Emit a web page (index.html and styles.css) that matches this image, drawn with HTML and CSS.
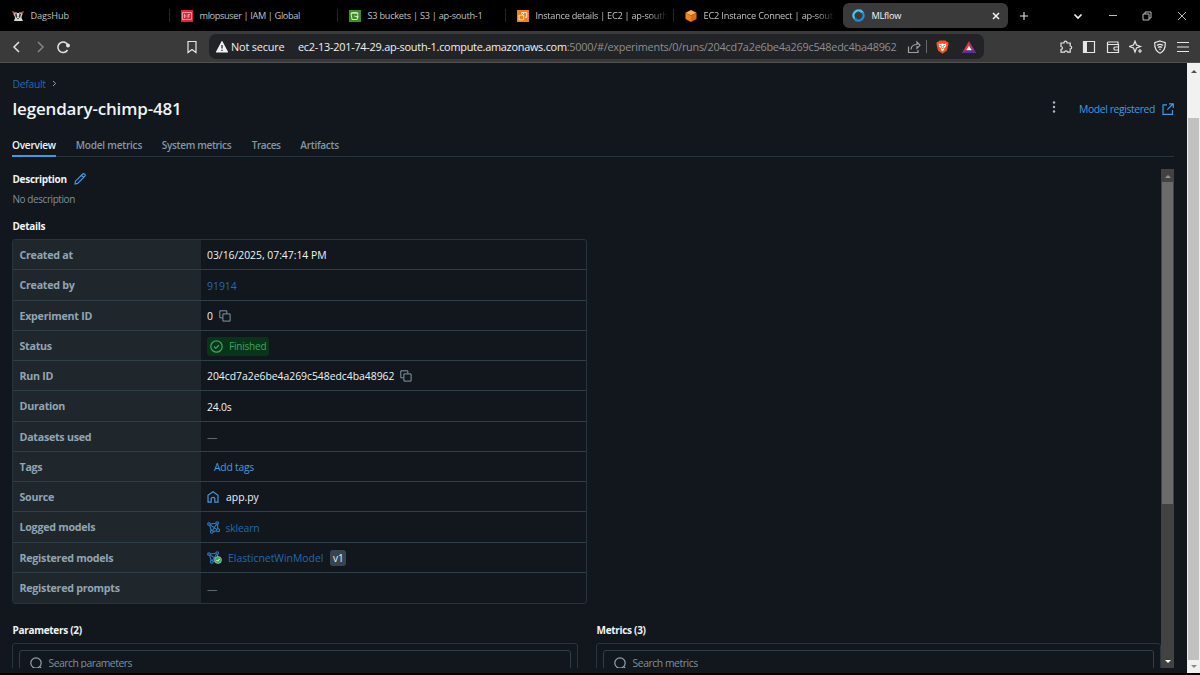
FILE: index.html
```html
<!DOCTYPE html>
<html lang="en">
<head>
<meta charset="utf-8">
<title>MLflow</title>
<link rel="stylesheet" href="styles.css">
</head>
<body>
<svg class="defs" width="0" height="0">
  <symbol id="copy" viewBox="0 0 12 12"><path d="M3.5 7.8H.8V.8h7v2.7M3.9 3.9h7.2v7.2H3.9z"/></symbol>
  <symbol id="model" viewBox="0 0 13 13"><path d="M3.300 3l5.500-.7M2.600 4.300l1.700 5.200M3.200 3.900l6.500 4.500M9.500 3.300L5.500 9.500M10.400 3.400l.4 4.400M6.200 10.600l3.500-.8"/><circle cx="2" cy="3" r="1.300"/><circle cx="10.200" cy="2.100" r="1.300"/><circle cx="11" cy="9.300" r="1.500"/><circle cx="4.800" cy="10.800" r="1.400"/></symbol>
  <symbol id="search" viewBox="0 0 13 13"><circle cx="6" cy="6" r="5.200"/><path d="M9.700 9.700l2.700 2.800"/></symbol>
</svg>
<div class="window">
  <header class="tabbar">
    <div class="tab first">
      <svg class="fav" viewBox="0 0 12 12"><path d="M0 1l3 1 1 3-2 1zM12 1L9 2 8 5l2 1z" fill="#b4575c"/><path d="M2 4l2-2 1 1h2l1-1 2 2-.5 4L11 11H2l1-3z" fill="#d8d8d8"/><path d="M3 4l1.500-1 .8 4L4 8zM9 4L7.500 3l-.8 4L8 8z" fill="#333"/><path d="M5 8h2l-1 1.500z" fill="#222"/></svg>
      <span class="t1">DagsHub</span>
    </div>
    <div class="tab">
      <svg class="fav" viewBox="0 0 12 12"><path d="M0 0h12v12H0z" fill="#e0243a"/><path d="M1.500 2.500h9v7h-9zM3.500 4v4M3.500 6h2M7 8V4.500h2M7 6h1.500" stroke="#ffb3b8" stroke-width=".8"/></svg>
      <span class="t2">mlopsuser | IAM | Global</span>
    </div>
    <div class="tab">
      <svg class="fav" viewBox="0 0 12 12"><path d="M0 0h12v12H0z" fill="#3f8e25"/><path d="M2 3.200h7l-.8 6.300H3zM2 3.200c1-1 6-1 7 0M5.300 6l4.500 1.200" stroke="#e5f4df" stroke-width=".9"/></svg>
      <span class="t3">S3 buckets | S3 | ap-south-1</span>
    </div>
    <div class="tab">
      <svg class="fav" viewBox="0 0 12 12"><path d="M0 0h12v12H0z" fill="#f08019"/><path d="M2 5.200h4.700v4.600H2zM4.700 3.800V2.500h5v4.800H8M5 5l2-2" stroke="#fff0dc" stroke-width=".9"/></svg>
      <span class="t4 fade">Instance details | EC2 | ap-south</span>
    </div>
    <div class="tab last">
      <svg class="fav" viewBox="0 0 12 12"><path d="M6 0l5.500 2.700L6 5.400.5 2.700z" fill="#ffad55"/><path d="M.5 2.700L6 5.400V12L.5 9z" fill="#f58220"/><path d="M11.500 2.700L6 5.400V12l5.500-3z" fill="#e26a10"/></svg>
      <span class="t5 fade">EC2 Instance Connect | ap-sout</span>
    </div>
    <div class="tab active">
      <svg class="fav" viewBox="0 0 12 12" stroke-width="2"><path d="M2.300 8.900A4.700 4.700 0 0 1 8.200 1.900" stroke="#43c9ed"/><path d="M9.700 3.100A4.700 4.700 0 0 1 3.800 10.100" stroke="#1593e0"/><path d="M8 0l3 3-3.300.8z" fill="#43c9ed"/><path d="M4 12L1 9l3.300-.8z" fill="#1593e0"/></svg>
      <span class="t6">MLflow</span>
      <svg class="close" viewBox="0 0 8 8"><path d="M1 1l6 6M7 1L1 7"/></svg>
    </div>
    <svg class="plus" viewBox="0 0 10 10"><path d="M5 1v8M1 5h8"/></svg>
    <div class="winctl">
      <svg viewBox="0 0 12 12"><path d="M2.500 4.500L6 8l3.500-3.500" stroke-width="1.700"/></svg>
      <svg viewBox="0 0 12 12" class="dim"><path d="M2 5.500h8"/></svg>
      <svg viewBox="0 0 12 12" class="dim"><path d="M2 4h6v6H2zM4 4V2h6v6H8"/></svg>
      <svg viewBox="0 0 12 12" class="dim"><path d="M2 2l8 8M10 2l-8 8"/></svg>
    </div>
  </header>
  <div class="toolbar">
    <div class="nav">
      <svg viewBox="0 0 14 14"><path d="M9 2L4 7l5 5"/></svg>
      <svg viewBox="0 0 14 14" class="off"><path d="M5 2l5 5-5 5"/></svg>
      <svg viewBox="0 0 14 14"><path d="M11.500 10A5.200 5.200 0 1 1 12 5.500"/><circle cx="12" cy="5.500" r="1.200" fill="#e6e6e6"/></svg>
    </div>
    <svg class="bookmark" viewBox="0 0 14 14"><path d="M3 1.500h8v11L7 9.500l-4 3z"/></svg>
    <div class="address">
      <svg class="warn" viewBox="0 0 12 12"><path d="M6 .8L11.500 11H.5z" fill="#f2f2f2" stroke="#f2f2f2"/><path d="M6 4v3.500M6 8.700v1.200" stroke="#25272b" stroke-width="1.300"/></svg>
      <span class="insecure">Not secure</span>
      <span class="url"><b>ec2-13-201-74-29.ap-south-1.compute.amazonaws.com</b><i>:5000/#/experiments/0/runs/204cd7a2e6be4a269c548edc4ba48962</i></span>
      <svg class="share" viewBox="0 0 14 14"><path d="M1.500 6.500v6h9.500V10M4 9.500c.3-3.500 2.500-5 6-5V2l3 3.300-3 3V6"/></svg>
      <span class="bar"></span>
      <svg class="brave" viewBox="0 0 13 14"><path d="M3.500.5h6l1.200 1.200 1.500.3.3 2.500-1.500 6L6.500 13.700 2 10.500.5 4.500.800 2l1.500-.3z" fill="#f6501e"/><path d="M2.600 3.500l2.500.4 1.400-.5 1.400.5 2.500-.4-.6 3-1.800 2.200.3 1-1.800 1.600L4.700 9.700l.3-1-1.800-2.200z" fill="#fff"/><path d="M4 5.200l2 .9-.7 1.400L6.500 9l1.200-1.500L7 6.100l2-.9" stroke="#f6501e" stroke-width=".8"/></svg>
      <svg class="bat" viewBox="0 0 14 12"><path d="M7 0L0 12h3.500L7 5.500z" fill="#e4363c"/><path d="M7 0l7 12h-3.500L7 5.500z" fill="#a33480"/><path d="M0 12l2.800-2.800h8.400L14 12z" fill="#59309a"/><path d="M7 4.700L4.300 9.300h5.400z" fill="#fff"/></svg>
    </div>
    <div class="ext">
      <svg viewBox="0 0 14 14"><path d="M2 3h3c-.3-2.500 3.300-2.500 3 0h3.200v3c2 .2 2 2.800 0 3v3.200H8.500c-.3-1.700-2.700-1.700-3 0H2V9.500c2-.3 2-2.700 0-3z"/></svg>
      <svg viewBox="0 0 14 14"><path d="M1.500 1.500h11v11h-11z"/><path d="M1.500 1.500H5v11H1.500z" fill="#e6e6e6"/></svg>
      <svg viewBox="0 0 14 14"><path d="M12 4.500V2H2.500C1 2 1 4.500 2.500 4.500H12.500v8h-11V3M12.500 7H9c-1.500 0-1.500 3 0 3h3.500"/></svg>
      <svg viewBox="0 0 14 14"><path d="M6 1.200L7.500 5l4 1.500-4 1.500L6 12 4.500 8l-4-1.500L4.500 5zM11 9v4M9 11h4"/></svg>
      <svg viewBox="0 0 14 14"><path d="M7 1l5.300 1.800C12.500 8 11 11.500 7 13.200 3 11.500 1.500 8 1.700 2.800z"/><path d="M4 5.500c2-1.500 4-1.500 6 0M5 7.500c1.300-1 2.700-1 4 0M6.300 9.300h1.400" stroke-width="1.300"/></svg>
      <svg viewBox="0 0 14 14"><path d="M1 2.500h12M1 7h12M1 11.500h12"/></svg>
    </div>
  </div>
  <div class="viewport">
    <main class="page">
      <div class="crumbs"><span>Default</span><svg viewBox="0 0 5 7"><path d="M1 1l2.700 2.500L1 6"/></svg></div>
      <div class="titlerow">
        <h1>legendary-chimp-481</h1>
        <svg class="kebab" viewBox="0 0 4 12"><circle cx="2" cy="1.600" r="1.250"/><circle cx="2" cy="6" r="1.250"/><circle cx="2" cy="10.400" r="1.250"/></svg>
        <span class="registered">Model registered</span>
        <svg class="external" viewBox="0 0 12 12"><path d="M5 1.800H1v9.500h9.500V7M7 .8h4.300V5M11 1L5.300 6.700"/></svg>
      </div>
      <nav class="tabs">
        <a class="on n1">Overview</a><a class="n2">Model metrics</a><a class="n3">System metrics</a><a class="n4">Traces</a><a class="n5">Artifacts</a>
      </nav>
      <div class="scroller">
        <div class="content">
          <h2 class="desc"><span>Description</span><svg viewBox="0 0 12 12"><path d="M1 11l.5-2.800L8.700 1c1.200-1 3.200.9 2.200 2.200L3.700 10.400zM7.500 2.300l2.200 2.200"/></svg></h2>
          <p class="nodesc"><span>No description</span></p>
          <h2 class="details"><span>Details</span></h2>
          <div class="table">
            <div class="row"><div class="label"><span>Created at</span></div><div class="value"><span class="date">03/16/2025, 07:47:14 PM</span></div></div>
            <div class="row"><div class="label"><span>Created by</span></div><div class="value"><span class="link">91914</span></div></div>
            <div class="row"><div class="label"><span>Experiment ID</span></div><div class="value"><span>0</span><svg class="copy"><use href="#copy"/></svg></div></div>
            <div class="row"><div class="label"><span>Status</span></div><div class="value"><div class="status"><svg viewBox="0 0 13 13"><circle cx="6.500" cy="6.500" r="5.700"/><path d="M4 6.500l1.800 1.800L9 5"/></svg><span>Finished</span></div></div></div>
            <div class="row"><div class="label"><span>Run ID</span></div><div class="value"><span class="runid">204cd7a2e6be4a269c548edc4ba48962</span><svg class="copy"><use href="#copy"/></svg></div></div>
            <div class="row"><div class="label"><span>Duration</span></div><div class="value"><span class="dur">24.0s</span></div></div>
            <div class="row"><div class="label"><span>Datasets used</span></div><div class="value"><span class="dash">—</span></div></div>
            <div class="row"><div class="label"><span>Tags</span></div><div class="value"><span class="add">Add tags</span></div></div>
            <div class="row"><div class="label"><span>Source</span></div><div class="value"><svg class="ico" viewBox="0 0 12 12"><path d="M1 11.200V4.200L6 .8l5 3.400v7H7.800V7.500c0-1.500-3.600-1.500-3.600 0v3.700z"/></svg><span class="src">app.py</span></div></div>
            <div class="row"><div class="label"><span>Logged models</span></div><div class="value"><svg class="ico model"><use href="#model"/></svg><span class="link sk">sklearn</span></div></div>
            <div class="row"><div class="label"><span>Registered models</span></div><div class="value"><span class="regicon"><svg class="ico model"><use href="#model"/></svg><svg class="ok" viewBox="0 0 8 8"><circle cx="4" cy="4" r="3.500"/><path d="M2.500 4l1.100 1.200L5.600 3"/></svg></span><span class="link ewm">ElasticnetWinModel</span><span class="ver">v1</span></div></div>
            <div class="row"><div class="label"><span>Registered prompts</span></div><div class="value"><span class="dash">—</span></div></div>
          </div>
          <div class="panels">
            <section class="params"><h2><span>Parameters (2)</span></h2><div class="panel"><div class="field"><svg><use href="#search"/></svg><span>Search parameters</span></div></div></section>
            <section class="metrics"><h2><span>Metrics (3)</span></h2><div class="panel"><div class="field"><svg><use href="#search"/></svg><span>Search metrics</span></div></div></section>
          </div>
        </div>
        <div class="innerbar"><svg viewBox="0 0 12 13"><path d="M3 9h6L6 6z" fill="#949494"/></svg><div class="thumb"></div><svg class="down" viewBox="0 0 12 13"><path d="M3 5h6L6 8z" fill="#fff"/></svg></div>
      </div>
    </main>
    <div class="outerbar"><svg viewBox="0 0 12 12"><path d="M3 8h6L6 5z" fill="#505050"/></svg><div class="thumb"></div><svg viewBox="0 0 12 12"><path d="M3 5h6L6 8z" fill="#8a8a8a"/></svg></div>
  </div>
</div>
</body>
</html>
```
FILE: styles.css
```css
* { box-sizing: border-box; }
body { margin: 0; background: #000; font-family: "Open Sans", "Noto Sans", sans-serif; font-size: 10.4px; color: #f0f3f6; }
h1, h2, p { margin: 0; }
svg { display: block; flex: none; fill: none; stroke: currentColor; }
svg path[fill]:not([stroke]) { stroke: none; }
.defs { position: absolute; }
span { white-space: nowrap; }
.window { width: 1200px; height: 675px; overflow: hidden; display: flex; flex-direction: column; }

.tabbar { height: 31px; flex: none; display: flex; align-items: center; background: #000; color: #c2c2c2; font-size: 9.2px; letter-spacing: -.26px; }
.tab { width: 168px; height: 25px; flex: none; display: flex; align-items: center; padding-left: 11px; gap: 6.500px; position: relative; }
.tab::after { content: ""; position: absolute; right: 0; top: 6px; width: 1px; height: 13px; background: #252525; }
.tab.first { width: 170px; padding-left: 12px; }
.tab.last { width: 169px; }
.tab.last::after, .tab.active::after { display: none; }
.t1 { letter-spacing: -.1px; }
.t2 { letter-spacing: -.36px; }
.t5 { letter-spacing: -.18px; }
.fav { width: 12px; height: 12px; }
.fade { width: 132px; -webkit-mask-image: linear-gradient(90deg, #000 112px, transparent 132px); mask-image: linear-gradient(90deg, #000 112px, transparent 132px); }
.active { width: 165px; padding-left: 9px; background: #3a3a3a; border-radius: 6px; color: #f4f4f4; }
.active .fav { width: 13px; height: 13px; }
.close { width: 8px; height: 8px; margin-left: auto; margin-right: 8px; stroke-width: 1.500; }
.plus { width: 10px; height: 10px; margin-left: 11px; color: #e8e8e8; stroke-width: 1.100; }
.winctl { display: flex; gap: 22.700px; margin-left: auto; padding-right: 12px; color: #eee; }
.winctl svg { width: 12px; height: 12px; }
.winctl .dim { color: #bcbcbc; }

.toolbar { height: 32px; flex: none; display: flex; align-items: center; background: #3a3a3a; border-bottom: 1px solid #515151; color: #e6e6e6; }
.toolbar svg { width: 14px; height: 14px; stroke-width: 1.200; }
.nav { display: flex; gap: 9px; padding-left: 10px; }
.nav svg { stroke-width: 1.500; }
.off { color: #858585; }
.bookmark { margin-left: 115px; }
.address { width: 775px; height: 25px; margin-left: 10px; border-radius: 7px; background: #222327; display: flex; align-items: center; font-size: 10.9px; }
.address .warn { width: 12px; height: 12px; margin-left: 7px; }
.insecure { flex: none; width: 70px; padding-left: 3px; color: #f0f0f0; letter-spacing: -.18px; }
.url { flex: none; width: 609px; letter-spacing: -.255px; }
.url b { font-weight: 400; color: #f2f2f2; }
.url i { font-style: normal; color: #8e8e91; }
.address .share { color: #a0a0a0; }
.bar { width: 1px; height: 13px; margin: 0 9px 0 5px; background: #67686c; }
.address .brave { width: 13px; }
.address .bat { width: 14px; height: 12px; margin-left: 13px; }
.ext { display: flex; gap: 9.500px; margin-left: auto; padding-right: 10px; }

.viewport { height: 610px; display: flex; background: #11171c; }
.page { flex: 1; padding: 0 13px 0 12px; display: flex; flex-direction: column; height: 610px; }
.crumbs { display: flex; align-items: center; height: 15px; margin-top: 13px; gap: 6px; color: #2369b0; letter-spacing: -.3px; padding-left: .5px; }
.crumbs svg { width: 5px; height: 7px; color: #8da1b0; }
.titlerow { display: flex; align-items: center; height: 33px; padding-top: 2px; }
h1 { font-size: 17px; font-weight: 600; line-height: 31px; margin-right: auto; white-space: nowrap; letter-spacing: -.17px; padding-left: .5px; }
.kebab { width: 4px; height: 12px; fill: #a6b4bf; stroke: none; margin-top: -4px; }
.registered { margin-left: 23px; color: #4299e0; letter-spacing: -.4px; }
.external { width: 12px; height: 12px; margin-left: 7px; color: #4299e0; stroke-width: 1.200; }
.registered, .external { position: relative; }
.tabs { display: flex; gap: 20px; height: 33px; border-bottom: 1px solid #28353d; color: #8396a5; font-weight: 600; font-size: 10.1px; letter-spacing: -.25px; }
.tabs a { height: 33px; padding-top: 14px; line-height: 14px; white-space: nowrap; }
.tabs .on { color: #f0f4f8; border-bottom: 2px solid #4299e0; }
.n2 { width: 66px; }
.n3 { width: 70px; letter-spacing: -.36px; }
.n4 { width: 28.500px; letter-spacing: -.5px; }
.n5 { letter-spacing: -.3px; }
.scroller { margin-top: 12px; height: 499px; display: flex; overflow: hidden; }
.content { width: 1149px; height: 499px; overflow: hidden; }
h2 { font-size: 10px; font-weight: 700; line-height: 14px; letter-spacing: -.3px; }
h2 span { padding-left: .5px; }
.desc { display: flex; align-items: center; gap: 7px; height: 20px; }
.desc svg { width: 12px; height: 12px; color: #4299e0; stroke-width: 1.200; }
.nodesc { color: #7e909e; font-size: 10px; line-height: 14px; margin-top: 3px; letter-spacing: -.43px; padding-left: .5px; }
.details { margin-top: 13.500px; height: 19.500px; line-height: 13px; }

.table { width: 575px; height: 365px; border: 1px solid #28353d; border-radius: 3px; display: grid; grid-template-rows: repeat(12, 1fr); overflow: hidden; }
.row { display: flex; border-bottom: 1px solid #303e47; min-height: 0; }
.row:last-child { border-bottom: 0; }
.label { width: 188px; padding: 1px 0 0 6.500px; display: flex; align-items: center; background: #1f272d; color: #92a4b3; font-weight: 700; font-size: 10.7px; letter-spacing: -.27px; }
.value { display: flex; align-items: center; padding: 1.500px 0 0 6px; }
.date, .runid { letter-spacing: -.02px; }
.copy { width: 12px; height: 12px; margin-left: 6px; color: #8396a5; }
.link { color: #2369b0; }
.sk, .dur { letter-spacing: -.2px; }
.status { height: 19px; width: 62px; border-radius: 3px; background: #08341a; color: #3ba65e; display: flex; align-items: center; gap: 6px; padding-left: 3px; font-size: 10px; letter-spacing: -.2px; }
.status svg { width: 13px; height: 13px; stroke-width: 1.200; }
.dash { color: #5b6973; }
.add { color: #4299e0; padding-left: 7px; letter-spacing: -.25px; }
.ico { width: 12px; height: 12px; margin-right: 7px; color: #4299e0; stroke-width: 1.200; }
.model { width: 13px; height: 13px; margin-right: 5.500px; color: #2f7fc8; stroke-width: 1.100; }
.regicon { position: relative; margin-right: 2.500px; }
.ok { position: absolute; left: 7px; top: 5px; width: 8px; height: 8px; }
.ok circle { fill: #3ba65e; stroke: #d8f0df; stroke-width: .5; }
.ok path { stroke: #fff; }
.ver { margin-left: 7px; width: 16px; height: 16px; line-height: 16px; text-align: center; border-radius: 3px; background: #37444f; font-size: 10px; }

.panels { display: flex; gap: 18px; margin-top: 19px; }
.params { width: 566px; }
.metrics { width: 565px; }
.panel { height: 80px; margin-top: 6px; padding: 6px; border: 1px solid #28353d; border-radius: 3px; }
.field { height: 26px; border: 1px solid #303e47; border-radius: 3px; display: flex; align-items: center; padding-left: 10px; gap: 5.500px; color: #7e909e; letter-spacing: -.5px; }
.metrics .field { letter-spacing: -.45px; }
.field svg { width: 13px; height: 13px; color: #92a4b3; stroke-width: 1.200; }

.innerbar { width: 13px; height: 499px; background: #424242; flex: none; display: flex; flex-direction: column; align-items: center; }
.innerbar svg { width: 12px; height: 13px; }
.innerbar .thumb { width: 11px; height: 322px; background: #6b6b6b; }
.innerbar .down { margin-top: auto; }
.outerbar { width: 13px; height: 610px; background: #f1f1f1; display: flex; flex-direction: column; align-items: center; padding: 2px 0 1px; }
.outerbar svg { width: 12px; height: 12px; }
.outerbar .thumb { width: 11px; flex: 1; margin: 41px 0 0; background: #c1c1c1; }
```
